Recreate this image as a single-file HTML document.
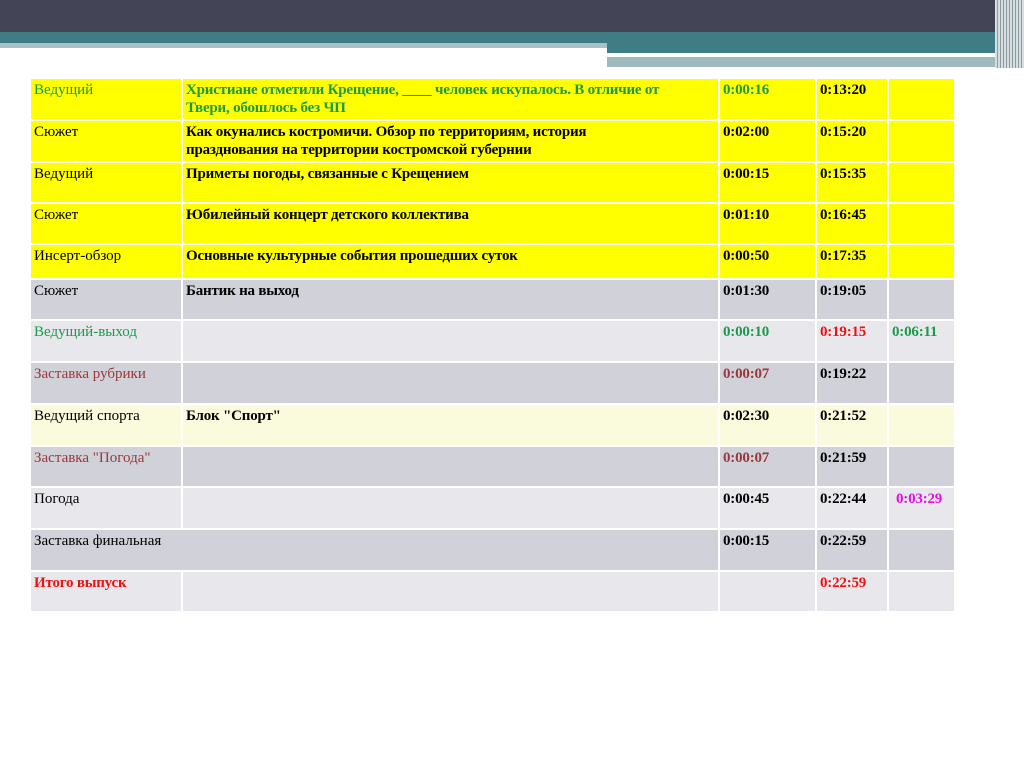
<!DOCTYPE html>
<html><head><meta charset="utf-8"><style>
body{margin:0;width:1024px;height:767px;background:#fff;position:relative;overflow:hidden;font-family:"Liberation Serif",serif}
.b{position:absolute}
table{position:absolute;left:29px;top:77px;border-collapse:separate;border-spacing:2px;table-layout:fixed;width:927px}
td{vertical-align:top;padding:2px 3px 0 3px;font-size:15px;line-height:18px;overflow:hidden;letter-spacing:0px;white-space:normal}
td.t{font-weight:bold;letter-spacing:-0.2px}
.y td{background:#ffff00}
.g td{background:#d0d1d9}
.l td{background:#e8e8ec}
.ly td{background:#fafadc}
.gr{color:#1a9a4a}.br{color:#9a3838}.rd{color:#ee1111}.mg{color:#e010e0}
</style></head><body>
<div class="b" style="left:0;top:0;width:1024px;height:32px;background:#434557"></div>
<div class="b" style="left:0;top:32px;width:1000px;height:11px;background:#3f7c83"></div>
<div class="b" style="left:0;top:43px;width:607px;height:5px;background:#a9c0c4"></div>
<div class="b" style="left:607px;top:43px;width:393px;height:10px;background:#3f7c83"></div>
<div class="b" style="left:607px;top:57px;width:395px;height:10px;background:#9fb9bd"></div>
<div class="b" style="left:995px;top:0;width:29px;height:68px;background:repeating-linear-gradient(90deg,#d8dee0 0 2px,#8a9ca2 2px 3px)"></div>
<table>
<colgroup><col style="width:150px"><col style="width:535px"><col style="width:95px"><col style="width:70px"><col style="width:65px"></colgroup>
<tr class="y" style="height:40px"><td class="gr">Ведущий</td><td class="t gr">Христиане отметили Крещение, ____ человек искупалось. В отличие от<br>Твери, обошлось без ЧП</td><td class="t gr">0:00:16</td><td class="t">0:13:20</td><td></td></tr>
<tr class="y" style="height:40px"><td>Сюжет</td><td class="t">Как окунались костромичи. Обзор по территориям, история<br>празднования на территории костромской губернии</td><td class="t">0:02:00</td><td class="t">0:15:20</td><td></td></tr>
<tr class="y" style="height:39px"><td>Ведущий</td><td class="t">Приметы погоды, связанные с Крещением</td><td class="t">0:00:15</td><td class="t">0:15:35</td><td></td></tr>
<tr class="y" style="height:39px"><td>Сюжет</td><td class="t">Юбилейный концерт детского коллектива</td><td class="t">0:01:10</td><td class="t">0:16:45</td><td></td></tr>
<tr class="y" style="height:33px"><td>Инсерт-обзор</td><td class="t">Основные культурные события прошедших суток</td><td class="t">0:00:50</td><td class="t">0:17:35</td><td></td></tr>
<tr class="g" style="height:39px"><td>Сюжет</td><td class="t">Бантик на выход</td><td class="t">0:01:30</td><td class="t">0:19:05</td><td></td></tr>
<tr class="l" style="height:40px"><td class="gr">Ведущий-выход</td><td></td><td class="t gr">0:00:10</td><td class="t rd">0:19:15</td><td class="t gr">0:06:11</td></tr>
<tr class="g" style="height:40px"><td class="br">Заставка рубрики</td><td></td><td class="t br">0:00:07</td><td class="t">0:19:22</td><td></td></tr>
<tr class="ly" style="height:40px"><td>Ведущий спорта</td><td class="t">Блок "Спорт"</td><td class="t">0:02:30</td><td class="t">0:21:52</td><td></td></tr>
<tr class="g" style="height:39px"><td class="br">Заставка "Погода"</td><td></td><td class="t br">0:00:07</td><td class="t">0:21:59</td><td></td></tr>
<tr class="l" style="height:40px"><td>Погода</td><td></td><td class="t">0:00:45</td><td class="t">0:22:44</td><td class="t mg" style="padding-left:7px">0:03:29</td></tr>
<tr class="g" style="height:40px"><td colspan="2">Заставка финальная</td><td class="t">0:00:15</td><td class="t">0:22:59</td><td></td></tr>
<tr class="l" style="height:39px"><td class="t rd">Итого выпуск</td><td></td><td></td><td class="t rd">0:22:59</td><td></td></tr>
</table>
</body></html>
